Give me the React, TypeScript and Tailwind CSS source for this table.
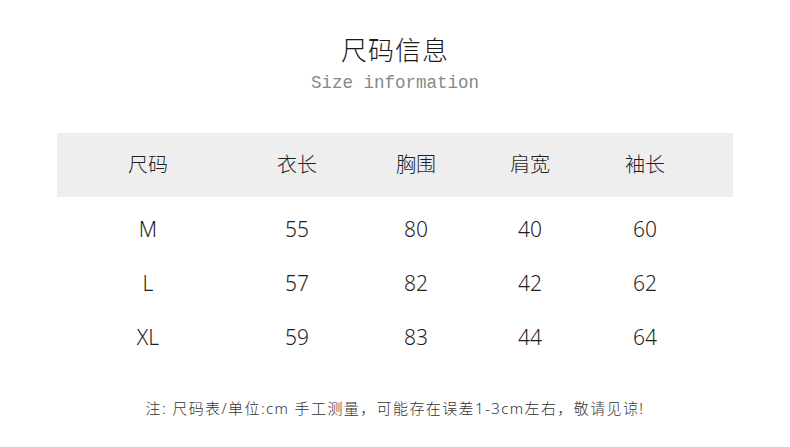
const headers = ['尺码', '衣长', '胸围', '肩宽', '袖长']

const rows = [
  ['M', '55', '80', '40', '60'],
  ['L', '57', '82', '42', '62'],
  ['XL', '59', '83', '44', '64'],
]

const cols = 'grid grid-cols-[182px_116px_122px_106px_124px]'

export default function App() {
  return (
    <div className="h-[447px] w-[790px] bg-white font-['Noto_Sans','Noto_Sans_CJK_SC',sans-serif] text-[#2a2a2a]">
      {/* Title */}
      <div className="flex flex-col items-center pt-[32px]">
        <h1 className="text-[26px] font-light leading-[36px] tracking-[1px] text-[#1a1a1a]">尺码信息</h1>
        <p className="mt-[4px] font-['Liberation_Mono',monospace] text-[17.5px] leading-[22px] text-[#888]">
          Size information
        </p>
      </div>

      {/* Table */}
      <div className="ml-[57px] mt-[39px] w-[676px]">
        <div className={`${cols} h-[64px] items-center bg-[#eeeeee]`}>
          {headers.map((h) => (
            <span key={h} className="text-center text-[20px] font-light text-[#1f1f1f]">{h}</span>
          ))}
        </div>
        <div className="mt-[6px]">
          {rows.map((r) => (
            <div key={r[0]} className={`${cols} h-[54px] items-center`}>
              {r.map((c, i) => (
                <span key={i} className="text-center text-[21px] font-light text-[#1f1f1f]">{c}</span>
              ))}
            </div>
          ))}
        </div>
      </div>

      {/* Note */}
      <p className="mt-[32px] text-center text-[15px] font-light tracking-[1.4px] text-[#333]">
        注: 尺码表/单位:cm 手工测量，可能存在误差1-3cm左右，敬请见谅!
      </p>
    </div>
  )
}
